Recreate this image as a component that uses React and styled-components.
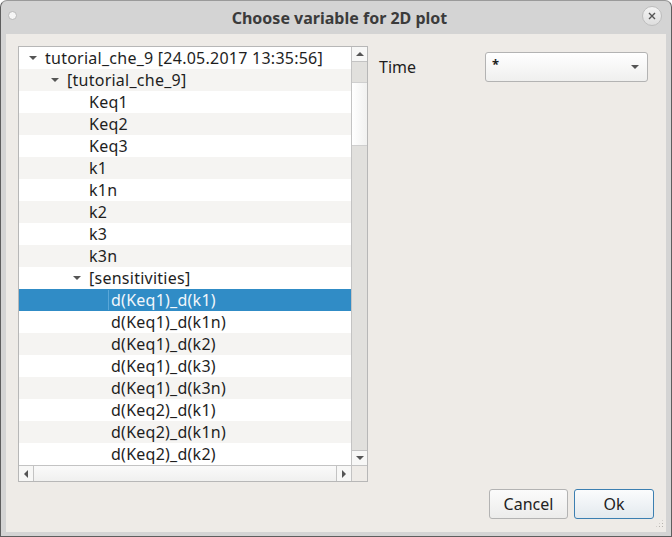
import React from "react"
import styled, { createGlobalStyle } from "styled-components"

const GlobalStyle = createGlobalStyle`
  html, body {
    margin: 0;
    padding: 0;
    background: #ffffff;
  }
  * {
    box-sizing: border-box;
  }
`

const Window = styled.div`
  width: 672px;
  height: 537px;
  display: flex;
  flex-direction: column;
  background: #d4d4d4;
  border: 1px solid #5e5e5e;
  border-top-color: #9a9a9a;
  border-radius: 7px 7px 0 0;
  font-family: "Noto Sans", "Open Sans", sans-serif;
  color: #1e1e1e;
  position: relative;
`

const TitleBar = styled.div`
  height: 33px;
  flex: 0 0 33px;
  display: flex;
  align-items: center;
  justify-content: space-between;
  padding: 0 9px 0 7px;
`

const MenuDot = styled.div`
  width: 9px;
  height: 9px;
  border-radius: 50%;
  background: #f6f6f6;
  border: 1px solid #b9b9b9;
  margin-top: -5px;
`

const Title = styled.div`
  font-size: 16px;
  font-weight: 700;
  color: #3b3b3b;
  margin-left: 20px;
`

const CloseButton = styled.div`
  width: 20px;
  height: 20px;
  border-radius: 50%;
  border: 1px solid #bdbdbd;
  background: linear-gradient(#f4f4f4, #dedede);
  display: flex;
  align-items: center;
  justify-content: center;
  margin-top: -3px;
`

const Body = styled.div`
  flex: 1;
  margin: 0 5px 4px 5px;
  background: #eeebe7;
  display: flex;
  flex-direction: column;
  padding: 12px 12px 12px 12px;
`

const Main = styled.div`
  display: flex;
  gap: 11px;
`

const TreeBox = styled.div`
  width: 350px;
  height: 436px;
  border: 1px solid #b7b7b7;
  background: #ffffff;
  display: grid;
  grid-template-columns: 1fr 16px;
  grid-template-rows: 1fr 16px;
`

const Rows = styled.div`
  overflow: hidden;
`

const Row = styled.div`
  height: 22px;
  display: flex;
  align-items: center;
  padding-left: ${p => p.$level * 22 + 6}px;
  background: ${p => (p.$selected ? "#308cc6" : p.$alt ? "#f5f4f2" : "#ffffff")};
  color: ${p => (p.$selected ? "#f2f7fb" : "#1e1e1e")};
  font-size: 16px;
  letter-spacing: 0.25px;
  white-space: nowrap;
`

const Toggle = styled.span`
  width: 16px;
  flex: 0 0 16px;
  display: flex;
  justify-content: center;
  margin-right: 4px;
`

const Label = styled.span`
  padding: 0 2px;
  line-height: 20px;
  border-left: ${p => (p.$focus ? "1px solid #5aa7d8" : "1px solid transparent")};
  margin-left: -3px;
`

const VScroll = styled.div`
  border-left: 1px solid #c3c3c3;
  display: flex;
  flex-direction: column;
  background: #e1e0dd;
`

const ArrowButton = styled.div`
  width: 15px;
  height: 15px;
  flex: 0 0 15px;
  background: #f7f7f6;
  display: flex;
  align-items: center;
  justify-content: center;
  border-${p => p.$side}: 1px solid #c3c3c3;
`

const Track = styled.div`
  flex: 1;
  display: flex;
  flex-direction: ${p => (p.$horizontal ? "row" : "column")};
`

const Handle = styled.div`
  margin-top: 20px;
  height: 64px;
  background: linear-gradient(to right, #ffffff, #f1f1f0);
  border-top: 1px solid #cfcfcf;
  border-bottom: 1px solid #cfcfcf;
`

const HScroll = styled.div`
  border-top: 1px solid #c3c3c3;
  display: flex;
  background: #f4f4f3;
`

const HHandle = styled.div`
  flex: 1;
  background: linear-gradient(#fafafa, #f0f0ef);
`

const Corner = styled.div`
  border-top: 1px solid #c3c3c3;
  border-left: 1px solid #c3c3c3;
  background: #eeebe7;
`

const Side = styled.div`
  flex: 1;
  padding-right: 6px;
`

const FieldRow = styled.div`
  display: flex;
  align-items: center;
  margin-top: 6px;
`

const FieldLabel = styled.div`
  flex: 0 0 106px;
  font-size: 16px;
  padding-bottom: 1px;
`

const Combo = styled.div`
  flex: 1;
  height: 30px;
  border: 1px solid #b3b3b3;
  border-radius: 3px;
  background: linear-gradient(#ffffff, #efefee);
  display: flex;
  align-items: center;
  justify-content: space-between;
  padding: 0 8px 0 6px;
  font-size: 14px;
`

const Star = styled.span`
  margin-top: -7px;
  font-weight: 700;
  font-size: 13px;
`

const Buttons = styled.div`
  display: flex;
  justify-content: flex-end;
  gap: 6px;
  margin-top: 7px;
`

const Button = styled.div`
  width: ${p => p.$width}px;
  height: 30px;
  border: 1px solid ${p => (p.$default ? "#3c7fb1" : "#b3b3b3")};
  border-radius: 3px;
  background: ${p =>
    p.$default ? "linear-gradient(#fbfcfd, #e3e9ee)" : "linear-gradient(#fbfbfb, #ececeb)"};
  display: flex;
  align-items: center;
  justify-content: center;
  font-size: 16px;
  color: #222;
`

const Grip = styled.div`
  position: absolute;
  right: 7px;
  bottom: 8px;
  width: 9px;
  height: 9px;
  background-image: radial-gradient(circle, #b5b2ad 0.8px, transparent 1px);
  background-size: 3px 3px;
  clip-path: polygon(100% 0, 100% 100%, 0 100%);
`

const Triangle = ({ dir }) => {
  const pts = {
    down: "0,0 8,0 4,4",
    up: "0,4 8,4 4,0",
    left: "4,0 4,8 0,4",
    right: "0,0 0,8 4,4",
  }[dir]
  const vertical = dir === "down" || dir === "up"
  return (
    <svg width={vertical ? 8 : 4} height={vertical ? 4 : 8} viewBox={vertical ? "0 0 8 4" : "0 0 4 8"}>
      <polygon points={pts} fill="#555" />
    </svg>
  )
}

const items = [
  { text: "tutorial_che_9 [24.05.2017 13:35:56]", level: 0, open: true },
  { text: "[tutorial_che_9]", level: 1, open: true },
  { text: "Keq1", level: 2 },
  { text: "Keq2", level: 2 },
  { text: "Keq3", level: 2 },
  { text: "k1", level: 2 },
  { text: "k1n", level: 2 },
  { text: "k2", level: 2 },
  { text: "k3", level: 2 },
  { text: "k3n", level: 2 },
  { text: "[sensitivities]", level: 2, open: true },
  { text: "d(Keq1)_d(k1)", level: 3, selected: true },
  { text: "d(Keq1)_d(k1n)", level: 3 },
  { text: "d(Keq1)_d(k2)", level: 3 },
  { text: "d(Keq1)_d(k3)", level: 3 },
  { text: "d(Keq1)_d(k3n)", level: 3 },
  { text: "d(Keq2)_d(k1)", level: 3 },
  { text: "d(Keq2)_d(k1n)", level: 3 },
  { text: "d(Keq2)_d(k2)", level: 3 },
]

const App = () => {
  return (
    <>
      <GlobalStyle />
      <Window>
        <TitleBar>
          <MenuDot />
          <Title>Choose variable for 2D plot</Title>
          <CloseButton>
            <svg width="8" height="8" viewBox="0 0 8 8">
              <path d="M1 1 L7 7 M7 1 L1 7" stroke="#555" strokeWidth="1.4" />
            </svg>
          </CloseButton>
        </TitleBar>
        <Body>
          <Main>
            <TreeBox>
              <Rows>
                {items.map((it, i) => (
                  <Row key={i} $level={it.level} $alt={i % 2 === 1} $selected={it.selected}>
                    <Toggle>{it.open && <Triangle dir="down" />}</Toggle>
                    <Label $focus={it.selected}>{it.text}</Label>
                  </Row>
                ))}
              </Rows>
              <VScroll>
                <ArrowButton $side="bottom">
                  <Triangle dir="up" />
                </ArrowButton>
                <Track>
                  <Handle />
                </Track>
                <ArrowButton $side="top">
                  <Triangle dir="down" />
                </ArrowButton>
              </VScroll>
              <HScroll>
                <ArrowButton $side="right">
                  <Triangle dir="left" />
                </ArrowButton>
                <Track $horizontal>
                  <HHandle />
                </Track>
                <ArrowButton $side="left">
                  <Triangle dir="right" />
                </ArrowButton>
              </HScroll>
              <Corner />
            </TreeBox>
            <Side>
              <FieldRow>
                <FieldLabel>Time</FieldLabel>
                <Combo>
                  <Star>*</Star>
                  <Triangle dir="down" />
                </Combo>
              </FieldRow>
            </Side>
          </Main>
          <Buttons>
            <Button $width={79}>Cancel</Button>
            <Button $width={80} $default>
              Ok
            </Button>
          </Buttons>
        </Body>
        <Grip />
      </Window>
    </>
  )
}

export default App
